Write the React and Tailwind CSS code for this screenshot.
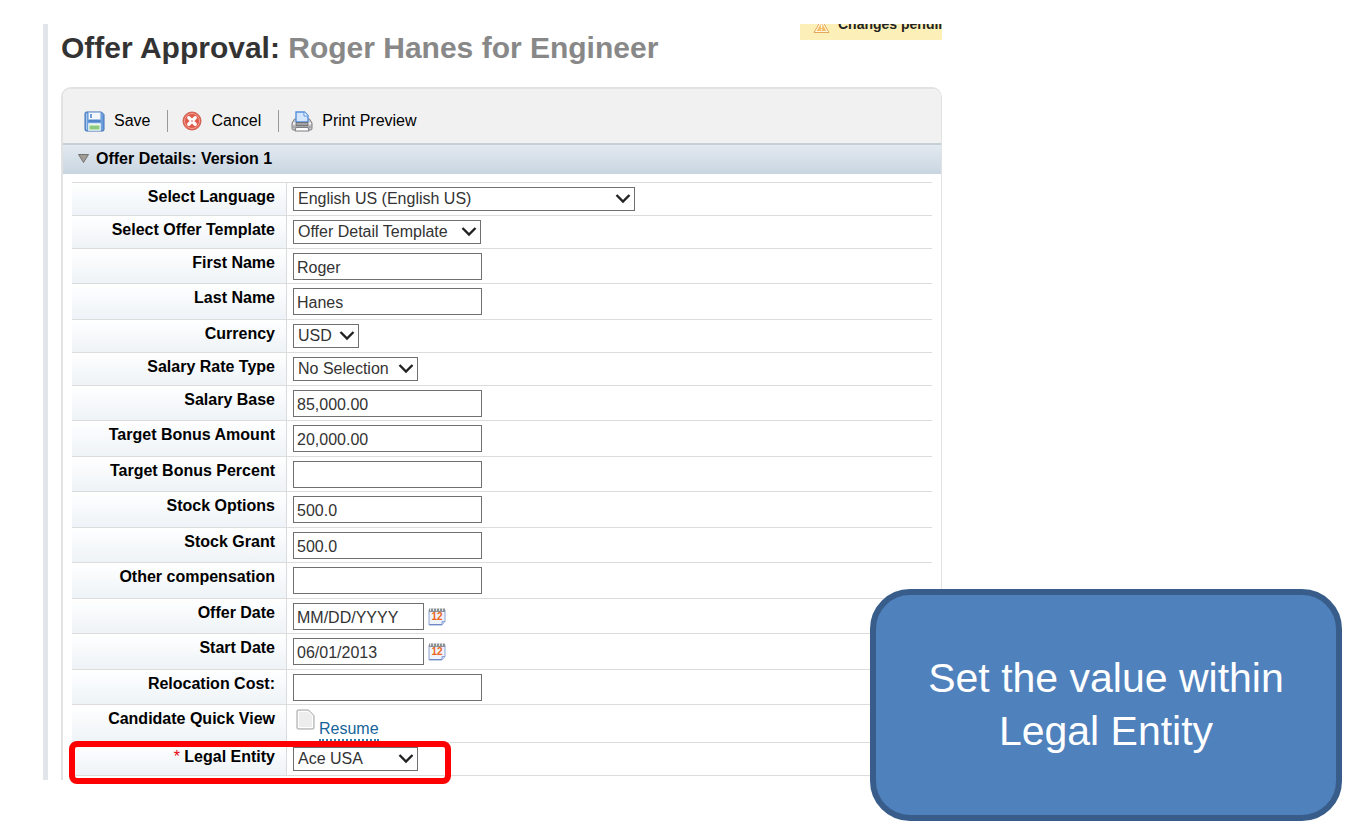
const textRows = 'odd:h-[35px] even:h-9';
const selectRows = 'h-[33px]';

const fields = [
  { id: 'language', label: 'Select Language', type: 'select', value: 'English US (English US)', width: 'w-[342px]' },
  { id: 'template', label: 'Select Offer Template', type: 'select', value: 'Offer Detail Template', width: 'w-[188px]' },
  { id: 'firstName', label: 'First Name', type: 'text', value: 'Roger' },
  { id: 'lastName', label: 'Last Name', type: 'text', value: 'Hanes' },
  { id: 'currency', label: 'Currency', type: 'select', value: 'USD', width: 'w-[66px]' },
  { id: 'rateType', label: 'Salary Rate Type', type: 'select', value: 'No Selection', width: 'w-[125px]' },
  { id: 'salaryBase', label: 'Salary Base', type: 'text', value: '85,000.00' },
  { id: 'bonusAmount', label: 'Target Bonus Amount', type: 'text', value: '20,000.00' },
  { id: 'bonusPercent', label: 'Target Bonus Percent', type: 'text', value: '' },
  { id: 'stockOptions', label: 'Stock Options', type: 'text', value: '500.0' },
  { id: 'stockGrant', label: 'Stock Grant', type: 'text', value: '500.0' },
  { id: 'otherComp', label: 'Other compensation', type: 'text', value: '' },
  { id: 'offerDate', label: 'Offer Date', type: 'date', value: 'MM/DD/YYYY' },
  { id: 'startDate', label: 'Start Date', type: 'date', value: '06/01/2013' },
  { id: 'relocation', label: 'Relocation Cost:', type: 'text', value: '' },
  { id: 'quickView', label: 'Candidate Quick View', type: 'link', value: 'Resume' },
  { id: 'legalEntity', label: 'Legal Entity', type: 'select', value: 'Ace USA', width: 'w-[125px]', required: true, highlight: true },
];

function SaveIcon() {
  return (
    <svg width="21" height="21" viewBox="0 0 21 21" aria-hidden="true">
      <path d="M1 2.5C1 1.5 1.5 1 2.5 1h15L20 3.5v15c0 1-.5 1.500-1.500 1.500h-16C1.500 20 1 19.500 1 18.500z" fill="#6d9fdc" stroke="#3f6fb5" />
      <path d="M2.500 2.500v16" stroke="#a9c8ef" />
      <path d="M4.500 1.500h12v7h-12z" fill="#f4f8fd" stroke="#9dbbe2" strokeWidth=".7" />
      <path d="M7 3v4" stroke="#4a7cc4" strokeWidth="1.500" />
      <path d="M4.500 10h12" stroke="#4f82c6" strokeWidth="2" />
      <path d="M4.500 12.500h12v7h-12z" fill="#eff7e8" stroke="#dce9f5" strokeWidth=".8" />
      <path d="M5.500 14.500h10v4h-10z" fill="#8bcb80" />
    </svg>
  );
}

function CancelIcon() {
  return (
    <svg width="20" height="20" viewBox="0 0 20 20" aria-hidden="true">
      <circle cx="10" cy="10" r="9" fill="#e05a49" stroke="#d0604f" />
      <circle cx="10" cy="10" r="7.500" fill="none" stroke="#f3a096" strokeWidth="1" />
      <path d="M6.800 6.800l6.400 6.400M13.200 6.800l-6.400 6.400" stroke="#fff" strokeWidth="3.400" strokeLinecap="round" />
      <rect x="9" y="9" width="2" height="2" fill="#f0b3ab" />
    </svg>
  );
}

function PrintIcon() {
  return (
    <svg width="22" height="21" viewBox="0 0 22 21" aria-hidden="true">
      <path d="M3.500 8h15l2.500 4v5.500c0 .8-.5 1.500-1.500 1.500h-17C1.500 19 1 18.300 1 17.500V12z" fill="#c4c4c7" stroke="#7d7d82" />
      <path d="M5 11V1h8.500L17 4.500V11z" fill="#d3e6fd" stroke="#5790dc" strokeWidth="1.400" />
      <path d="M13 1v4h4" fill="#fff" stroke="#5790dc" />
      <path d="M2 12.500h3M17 12.500h3" stroke="#f5f5f5" strokeWidth="2" />
      <path d="M5 11.500h12v3H5z" fill="#a2a2a7" stroke="#66666b" strokeWidth=".8" />
      <path d="M2 16h18" stroke="#8b8b90" />
      <path d="M5 16.500h12l1 3.500H4z" fill="#fff" stroke="#7d7d82" />
    </svg>
  );
}

function CalendarIcon() {
  return (
    <svg width="18" height="19" viewBox="0 0 18 19" aria-hidden="true">
      <path d="M1 3h16v11.500l-3 3.500H1z" fill="#eef3fc" stroke="#8da2d4" />
      <path d="M1.500 17.500h12.500" stroke="#6f88c6" />
      <path d="M14 18v-3.500h3" fill="#c9d6f2" stroke="#8da2d4" />
      <path d="M1 1.500h16v3.500H1z" fill="#8b9094" />
      <path d="M2.500 1v3M5.500 1v3M8.500 1v3M11.500 1v3M14.500 1v3" stroke="#e4e7ea" />
      <text x="9" y="13" textAnchor="middle" fontSize="10" fontWeight="700" fill="#ee6420" fontFamily="Liberation Sans, sans-serif">12</text>
    </svg>
  );
}

function DocumentIcon() {
  return (
    <svg width="19" height="21" viewBox="0 0 19 21" aria-hidden="true">
      <path d="M1 2c0-.6.400-1 1-1h10.500L18 6.500V19c0 .6-.4 1-1 1H2c-.6 0-1-.4-1-1z" fill="#ededed" stroke="#a3a3a3" />
      <path d="M2.500 18.500v-16h9.500l4.500 4.500v11.500z" fill="none" stroke="#fff" />
    </svg>
  );
}

function WarningIcon() {
  return (
    <svg width="17" height="16" viewBox="0 0 17 16" className="shrink-0" aria-hidden="true">
      <path d="M8.500 1.500L16 14.500H1z" fill="#fff6e0" stroke="#e3a85c" strokeLinejoin="round" />
      <path d="M8.500 4.500l4.800 8.500H3.700z" fill="#f7bd62" />
      <path d="M8.500 6.500v3.500M8.500 11v1.300" stroke="#fff" strokeWidth="1.400" />
    </svg>
  );
}

function ToolbarButton({ icon, children }) {
  return (
    <button type="button" className="flex items-center gap-[9px] text-base leading-5 text-black">
      {icon}
      {children}
    </button>
  );
}

function SelectBox({ id, value, width }) {
  return (
    <div className={`relative ${width}`}>
      <select
        id={id}
        defaultValue={value}
        className="block h-6 w-full appearance-none border border-[#707070] bg-white pl-1 pr-5 text-base leading-5 text-[#333]"
      >
        <option>{value}</option>
      </select>
      <svg className="pointer-events-none absolute right-1 top-1.5" width="16" height="11" viewBox="0 0 16 11" aria-hidden="true">
        <path d="M1.500 2L8 8.500L14.500 2" fill="none" stroke="#222" strokeWidth="2.400" />
      </svg>
    </div>
  );
}

function TextBox({ id, value, width }) {
  return (
    <input
      id={id}
      type="text"
      defaultValue={value}
      className={`block h-[27px] border border-[#707070] bg-white px-[3px] pt-0.5 text-base leading-5 text-[#333] ${width}`}
    />
  );
}

function Control({ field }) {
  const { id, type, value, width } = field;
  if (type === 'select') return <SelectBox id={id} value={value} width={width} />;
  if (type === 'date') {
    return (
      <div className="flex items-center gap-1">
        <TextBox id={id} value={value} width="w-[131px]" />
        <button type="button" aria-label={`Choose ${field.label}`}>
          <CalendarIcon />
        </button>
      </div>
    );
  }
  if (type === 'link') {
    return (
      <div className="flex items-start gap-1 pl-[3px]">
        <DocumentIcon />
        <a id={id} href="#resume" className="mt-2.5 border-b-2 border-dotted border-[#2f7cab] text-base leading-5 text-[#16649a]">
          {value}
        </a>
      </div>
    );
  }
  return <TextBox id={id} value={value} width="w-[189px]" />;
}

function FieldRow({ field }) {
  const isText = field.type === 'text' || field.type === 'date';
  const height = isText ? textRows : field.type === 'link' ? 'h-[38px]' : selectRows;
  const labelClass =
    'border-r border-[#d9dcde] bg-linear-to-b from-white to-[#eef3f7] pr-[11px] pt-1 text-right text-base leading-5 font-bold text-black';
  const label = (
    <>
      {field.required && <span className="font-normal text-red-600">* </span>}
      {field.label}
    </>
  );

  return (
    <div className={`relative grid grid-cols-[215px_1fr] border-b border-[#dcdcdc] ${height}`}>
      {field.type === 'link' ? (
        <div className={labelClass}>{label}</div>
      ) : (
        <label htmlFor={field.id} className={labelClass}>{label}</label>
      )}
      <div className="pl-1.5 pt-1">
        <Control field={field} />
      </div>
      {field.highlight && (
        <div className="pointer-events-none absolute -left-[3px] -top-0.5 h-[43px] w-[382px] rounded-lg border-6 border-[#fe0000]" />
      )}
    </div>
  );
}

export default function App() {
  return (
    <div className="relative min-h-screen bg-white pt-6 pl-[43px] font-['Liberation_Sans',Arial,sans-serif]">
      <main className="w-full max-w-[899px] border-l-5 border-[#e2e6ea] pl-[13px]">
        <header className="flex items-start justify-between pb-[15px]">
          <h1 className="text-3xl leading-12 font-bold text-[#333]">
            Offer Approval: <span className="text-[#888]">Roger Hanes for Engineer</span>
          </h1>
          <div className="flex h-4 w-[142px] items-end gap-2 overflow-hidden bg-[#fcf0b8] pl-[13px] pb-1.5 text-sm leading-5 font-bold whitespace-nowrap text-[#222]">
            <WarningIcon />
            Changes pending
          </div>
        </header>

        <form className="rounded-t-[10px] border-t-2 border-r border-l-2 border-[#e2e2e2]">
          <div className="flex h-[54px] items-center rounded-t-lg bg-[#f1f1f1] pl-[21px] pt-2.5">
            <ToolbarButton icon={<SaveIcon />}>Save</ToolbarButton>
            <span className="mr-3.5 ml-[17px] h-[22px] w-px bg-[#999]" />
            <ToolbarButton icon={<CancelIcon />}>Cancel</ToolbarButton>
            <span className="mr-3 ml-[17px] h-[22px] w-px bg-[#999]" />
            <ToolbarButton icon={<PrintIcon />}>Print Preview</ToolbarButton>
          </div>

          <h2 className="border-t-2 border-[#c5d0d4] bg-linear-to-b from-[#e3eaf1] to-[#c8d5e0]">
            <button type="button" className="flex h-[29px] items-center gap-[7px] pl-[15px] pb-0.5 text-base leading-5 font-bold text-black">
              <svg width="11" height="9" viewBox="0 0 11 9" aria-hidden="true">
                <path d="M.5.500h10L5.500 8.500z" fill="#a09c98" stroke="#77736f" />
              </svg>
              Offer Details: Version 1
            </button>
          </h2>

          <div className="pt-2 pr-[9px] pb-1 pl-[9px]">
            <div className="border-t border-[#dcdcdc]">
              {fields.map((field) => (
                <FieldRow key={field.id} field={field} />
              ))}
            </div>
          </div>
        </form>
      </main>

      <aside className="absolute right-3.5 bottom-2 flex h-[232px] w-[472px] items-center justify-center rounded-[40px] border-6 border-[#385d8a] bg-[#4f81bd] px-10 text-center">
        <p className="text-[41px] leading-[53px] text-white">
          Set the value within Legal Entity
        </p>
      </aside>
    </div>
  );
}
